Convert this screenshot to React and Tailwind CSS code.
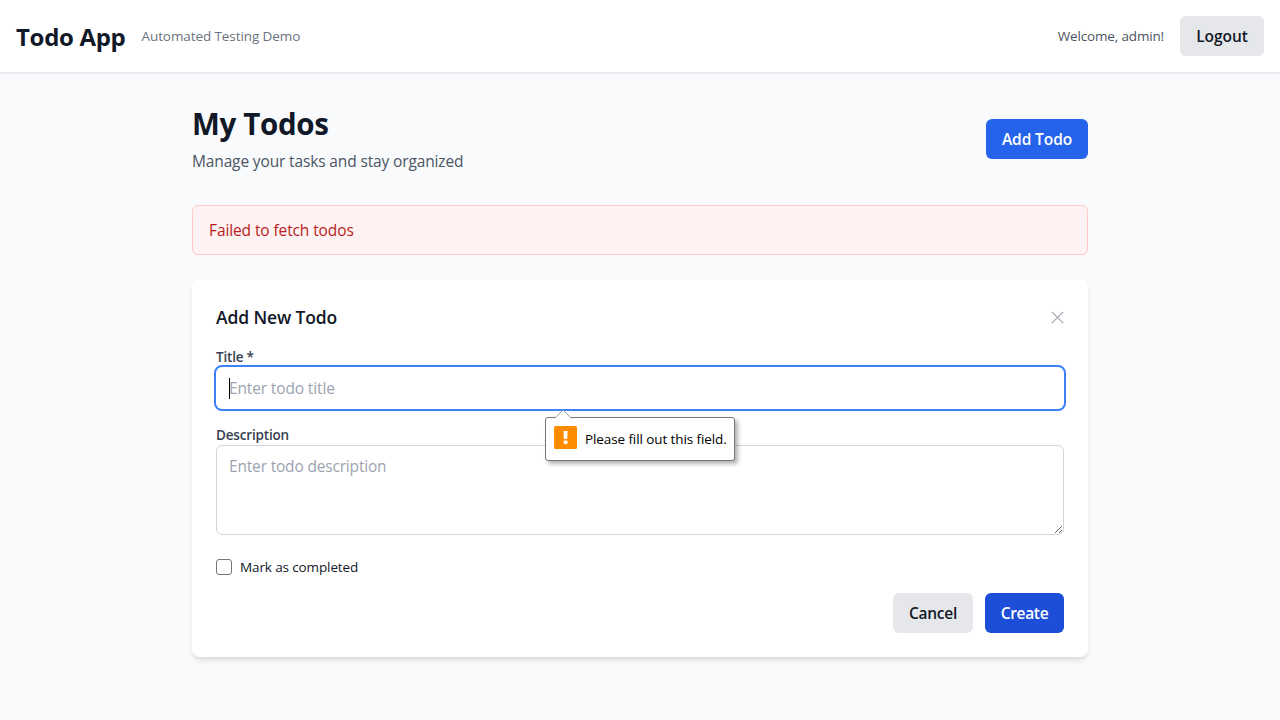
const button = "flex h-10 shrink-0 items-center justify-center rounded-md text-[15.5px] leading-6 font-semibold whitespace-nowrap";

function Header() {
  return (
    <header className="flex h-[73px] items-center justify-between border-b border-[#e5e7eb] bg-white px-4 shadow-[0_1px_2px_0_rgba(0,0,0,0.05)]">
      <div className="flex items-center gap-4">
        <h1 className="w-[109.5px] pt-0.5 text-2xl font-bold tracking-[-0.31px] whitespace-nowrap text-[#111827]">Todo App</h1>
        <span className="text-[13.5px] leading-5 tracking-[-0.09px] whitespace-nowrap text-[#6b7280]">Automated Testing Demo</span>
      </div>
      <div className="flex items-center gap-4">
        <span className="text-[13.5px] leading-5 tracking-[-0.16px] whitespace-nowrap text-[#4b5563]">Welcome, admin!</span>
        <button className={`${button} w-[84px] bg-[#e5e7eb] tracking-[-0.07px] text-[#111827]`}>Logout</button>
      </div>
    </header>
  );
}

function ValidationBubble() {
  return (
    <div className="absolute top-[50px] left-[329px] z-10 flex h-11 w-[190px] items-center rounded-[3px] border border-[#767676] bg-white pl-2 shadow-[3px_3px_4px_rgba(0,0,0,0.3)]">
      <svg className="absolute -top-[9px] left-2 h-[10px] w-[18px]" viewBox="0 0 18 10">
        <path d="M.7 9.3 9 1l8.3 8.3V10H.7z" fill="#fff" />
        <path d="M.7 9.3 9 1l8.3 8.3" fill="none" stroke="#a0a0a0" />
      </svg>
      <svg className="mb-1 size-[23px] shrink-0" viewBox="0 0 23 23">
        <rect width="23" height="23" rx="1.5" fill="#ff8c00" />
        <path d="M9.5 5h4.1l-.4 8H9.9z" fill="#fff" />
        <rect x="9.6" y="14.6" width="4" height="3.3" rx="1.2" fill="#fff" />
      </svg>
      <span className="ml-2 text-[13.5px] leading-5 tracking-[-0.1px] whitespace-nowrap text-black">Please fill out this field.</span>
    </div>
  );
}

function TodoForm() {
  return (
    <form className="rounded-lg bg-white p-6 shadow-md" onSubmit={(e) => e.preventDefault()}>
      <div className="mb-4 flex h-7 items-center justify-between">
        <h3 className="text-[17.5px] leading-7 font-semibold tracking-[-0.13px] whitespace-nowrap text-[#111827]">Add New Todo</h3>
        <button type="button" aria-label="Close" className="pt-px">
          <svg className="size-[13px]" viewBox="0 0 13 13" fill="none" stroke="#9ca3af" strokeWidth="1.2">
            <path d="M.8.8l11.4 11.4M12.2.8.8 12.2" />
          </svg>
        </button>
      </div>
      <div>
        <label htmlFor="title" className="block h-5 text-[13.5px] leading-5 font-semibold tracking-[-0.2px] text-[#374151]">
          <span>Title *</span>
        </label>
        <div className="relative">
          <input
            id="title"
            placeholder="Enter todo title"
            className="block h-[42px] w-full rounded-md border border-transparent px-3 py-2 text-[15.5px] leading-6 tracking-[-0.14px] ring-2 ring-[#3b82f6] outline-none placeholder:text-[#9ca3af]"
          />
          <span className="absolute top-[11px] left-[13px] h-[21px] w-px bg-black" />
          <ValidationBubble />
        </div>
      </div>
      <div className="mt-4">
        <label htmlFor="description" className="block h-5 text-[13.5px] leading-5 font-semibold tracking-[-0.17px] text-[#374151]">
          <span>Description</span>
        </label>
        <textarea
          id="description"
          rows={3}
          placeholder="Enter todo description"
          className="block h-[90px] w-full rounded-md border border-[#d1d5db] px-3 py-2 text-[15.5px] leading-6 tracking-[-0.18px] placeholder:text-[#9ca3af]"
        />
      </div>
      <label className="mt-[22px] flex h-5 items-center gap-2">
        <input type="checkbox" className="size-4 appearance-none rounded-[3px] border border-[#767676] bg-white" />
        <span className="text-[13.5px] leading-5 tracking-[-0.12px] whitespace-nowrap text-[#111827]">Mark as completed</span>
      </label>
      <div className="mt-4 flex justify-end gap-3">
        <button type="button" className={`${button} w-20 bg-[#e5e7eb] tracking-[-0.23px] text-[#111827]`}>Cancel</button>
        <button type="submit" className={`${button} w-[79px] bg-[#1d4ed8] tracking-[-0.33px] text-white`}>Create</button>
      </div>
    </form>
  );
}

export default function App() {
  return (
    <div className="min-h-screen bg-[#f9fafb] font-['Open_Sans','Noto_Sans',sans-serif]">
      <Header />
      <main className="mx-auto max-w-4xl py-8">
        <div className="mb-8 flex items-center justify-between">
          <div>
            <h2 className="h-9 text-[29.5px] leading-[38px] font-bold tracking-[-0.32px] whitespace-nowrap text-[#111827]">My Todos</h2>
            <p className="mt-2 text-[15.5px] leading-6 tracking-[-0.14px] whitespace-nowrap text-[#4b5563]">Manage your tasks and stay organized</p>
          </div>
          <button className={`${button} w-[102px] bg-[#2563eb] tracking-[-0.1px] text-white`}>Add Todo</button>
        </div>
        <div className="mb-6 rounded-md border border-[#fecaca] bg-[#fef2f2] px-4 py-3 text-[15.5px] leading-6 tracking-[-0.11px] text-[#b91c1c]">
          <span>Failed to fetch todos</span>
        </div>
        <TodoForm />
      </main>
    </div>
  );
}
